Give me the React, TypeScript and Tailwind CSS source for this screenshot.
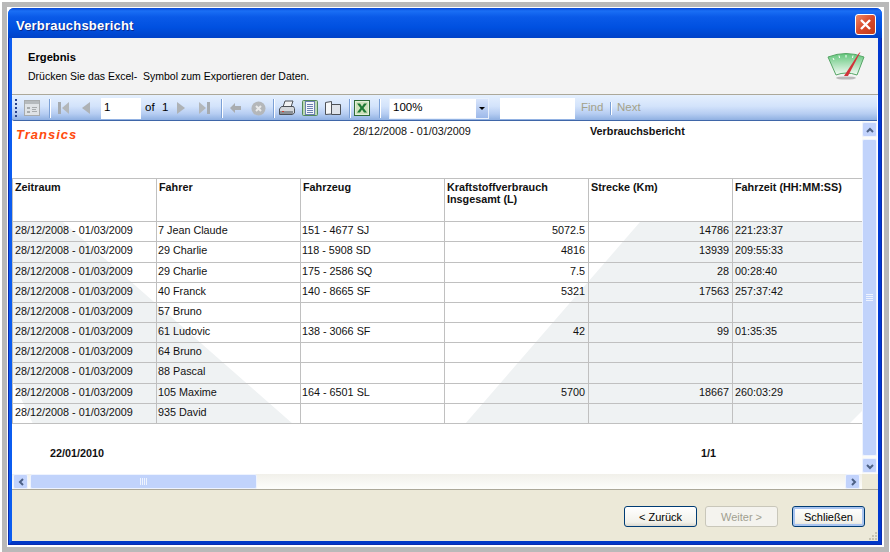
import React from "react";

const rows = [
  { driver: "7 Jean Claude", truck: "151 - 4677 SJ", fuel: "5072.5", km: "14786", time: "221:23:37", h: "h-[20px]" },
  { driver: "29 Charlie", truck: "118 - 5908 SD", fuel: "4816", km: "13939", time: "209:55:33", h: "h-[21px]" },
  { driver: "29 Charlie", truck: "175 - 2586 SQ", fuel: "7.5", km: "28", time: "00:28:40", h: "h-[20px]" },
  { driver: "40 Franck", truck: "140 - 8665 SF", fuel: "5321", km: "17563", time: "257:37:42", h: "h-[20px]" },
  { driver: "57 Bruno", truck: "", fuel: "", km: "", time: "", h: "h-[20px]" },
  { driver: "61 Ludovic", truck: "138 - 3066 SF", fuel: "42", km: "99", time: "01:35:35", h: "h-[20px]" },
  { driver: "64 Bruno", truck: "", fuel: "", km: "", time: "", h: "h-[20px]" },
  { driver: "88 Pascal", truck: "", fuel: "", km: "", time: "", h: "h-[21px]" },
  { driver: "105 Maxime", truck: "164 - 6501 SL", fuel: "5700", km: "18667", time: "260:03:29", h: "h-[20px]" },
  { driver: "935 David", truck: "", fuel: "", km: "", time: "", h: "h-[20px]" },
];

const grid = "grid grid-cols-[145px_144px_144px_144px_144px_129px]";
const cell = "border-r border-[#c0c0c0] overflow-hidden whitespace-nowrap";

function Sep({ className = "" }: { className?: string }) {
  return <div className={`h-[19px] w-[2px] shrink-0 border-l border-[#7ba0d6] bg-white ${className}`} />;
}

function Chevron({ dir }: { dir: "up" | "down" | "left" | "right" }) {
  const d = {
    up: "M2 7 L5 4 L8 7",
    down: "M2 4 L5 7 L8 4",
    left: "M7 2 L4 5 L7 8",
    right: "M4 2 L7 5 L4 8",
  }[dir];
  return (
    <svg width="10" height="10" viewBox="0 0 10 10" fill="none">
      <path d={d} stroke="#4d6185" strokeWidth="2" />
    </svg>
  );
}

function ScrollBtn({ dir, className = "" }: { dir: "up" | "down" | "left" | "right"; className?: string }) {
  return (
    <div className={`flex h-[15px] w-[15px] shrink-0 items-center justify-center rounded-[2px] border border-[#eef3fe] bg-[#c2d3fc] ${className}`}>
      <Chevron dir={dir} />
    </div>
  );
}

function Gauge() {
  return (
    <svg width="40" height="32" viewBox="0 0 40 32" className="mt-[12px] mr-[12px]">
      <defs>
        <linearGradient id="gaugeFill" x1="0" y1="0" x2="0" y2="1">
          <stop offset="0" stopColor="#62c67b" />
          <stop offset="1" stopColor="#f4fbf5" />
        </linearGradient>
      </defs>
      <ellipse cx="20" cy="28" rx="10" ry="1.6" fill="#b9b9b9" />
      <path d="M2 7 Q20 0 38 7 L31 25 Q20 21 10 25 Z" fill="url(#gaugeFill)" stroke="#55a565" strokeWidth="1" />
      <path d="M7 8 L8 10 M13 5.5 L13.500 8 M20 5 L20 7.500 M27 5.500 L26.500 8" stroke="#fff" strokeWidth="1" />
      <path d="M18 26 L33 3 L34.500 2 L22 26 Z" fill="#d2333a" />
    </svg>
  );
}

function Toolbar() {
  return (
    <div className="flex h-[26px] w-[865px] items-center rounded-l-[2px] border-b border-[#3f66a8] bg-[linear-gradient(#e5f0fe_0%,#d3e3fb_45%,#b6cdf2_75%,#8fb0e2_100%)] pt-[1px] text-[11.5px] text-black">
      {/* grip */}
      <div className="ml-[3px] flex w-[2px] flex-col gap-[2px]">
        <div className="h-[2px] bg-[#27418b]" />
        <div className="h-[2px] bg-[#27418b]" />
        <div className="h-[2px] bg-[#27418b]" />
        <div className="h-[2px] bg-[#27418b]" />
        <div className="h-[2px] bg-[#27418b]" />
      </div>
      {/* doc map */}
      <svg width="16" height="16" viewBox="0 0 16 16" className="ml-[7px]">
        <rect x="0.500" y="0.500" width="15" height="15" fill="#dfe3e6" stroke="#a7abad" />
        <rect x="1" y="1" width="14" height="3" fill="#b5babd" />
        <path d="M3 7h3v2H3zM3 11h3v2H3z" fill="#a7abad" />
        <path d="M8 7.500h5M8 9.500h4M8 11.500h5" stroke="#a7abad" />
      </svg>
      <Sep className="ml-[9px]" />
      {/* first */}
      <svg width="12" height="14" viewBox="0 0 12 14" className="ml-[7px]">
        <path d="M0 1h3v12H0z" fill="#a6abb0" />
        <path d="M11 1v12L4 7z" fill="#b3b7ba" />
      </svg>
      {/* prev */}
      <svg width="8" height="14" viewBox="0 0 8 14" className="ml-[12px]">
        <path d="M8 1v12L0 7z" fill="#aeb2b5" />
      </svg>
      <div className="ml-[11px] flex h-[21px] w-[40px] items-center bg-white pl-[3px]">1</div>
      <span className="ml-[4px] w-[17px]">of</span>
      <span className="w-[15px]">1</span>
      <svg width="8" height="14" viewBox="0 0 8 14">
        <path d="M0 1v12l8-6z" fill="#aeb2b5" />
      </svg>
      <svg width="12" height="14" viewBox="0 0 12 14" className="ml-[14px]">
        <path d="M0 1v12l7-6z" fill="#b3b7ba" />
        <path d="M8 1h3v12H8z" fill="#a6abb0" />
      </svg>
      <Sep className="ml-[10px]" />
      {/* back */}
      <svg width="11" height="10" viewBox="0 0 11 10" className="ml-[7px]">
        <path d="M0 5l5-5v3h6v4H5v3z" fill="#a9adb1" />
      </svg>
      {/* stop */}
      <svg width="15" height="15" viewBox="0 0 15 15" className="ml-[10px]">
        <circle cx="7.500" cy="7.500" r="7" fill="#b4b7ba" />
        <path d="M5 5l5 5M10 5l-5 5" stroke="#e9eaeb" strokeWidth="2" />
      </svg>
      <Sep className="ml-[7px]" />
      {/* print */}
      <svg width="16" height="16" viewBox="0 0 16 16" className="ml-[4px]">
        <path d="M6 1h8l-2 6H4z" fill="#f2f3f4" stroke="#4d5157" />
        <path d="M2.500 6.500h12l1 2v4.500l-2 1.500H0.500V9z" fill="#d5d8dc" stroke="#4d5157" />
        <rect x="1" y="11" width="13" height="3" fill="#8b9096" />
        <rect x="3" y="11" width="2" height="1" fill="#d23b2f" />
      </svg>
      {/* page */}
      <svg width="16" height="16" viewBox="0 0 16 16" className="ml-[7px]">
        <rect x="0.500" y="0.500" width="15" height="15" rx="1" fill="#bcd8b4" stroke="#53895a" />
        <rect x="3.500" y="1.500" width="9" height="13" fill="#f4f7fd" stroke="#6c80b0" />
        <path d="M5 4.500h6M5 6.500h6M5 8.500h6M5 10.500h6M5 12.500h6" stroke="#6c80b0" />
      </svg>
      {/* book */}
      <svg width="16" height="15" viewBox="0 0 16 15" className="ml-[7px]">
        <path d="M0.500 1.500L6.500 0.500V13L0.500 13.500z" fill="#f6f7f8" stroke="#4d5157" />
        <path d="M6.500 3.500h9v10h-9z" fill="#dfe3ea" stroke="#4d5157" />
      </svg>
      <Sep className="ml-[8px]" />
      {/* excel */}
      <svg width="16" height="16" viewBox="0 0 16 16" className="ml-[3px]">
        <rect x="0.500" y="0.500" width="15" height="15" fill="#e4efd9" stroke="#2e6b38" />
        <rect x="2" y="2" width="12" height="12" fill="#cfe2bc" />
        <path d="M3 3.500h3l2 3 2-3h3l-3.500 4.500 3.500 4.500h-3l-2-3-2 3H3l3.500-4.500z" fill="#1f7a34" />
      </svg>
      <Sep className="ml-[9px]" />
      <div className="ml-[8px] flex h-[21px] w-[100px] items-center border border-[#e8f0fc] bg-white">
        <span className="flex-1 pl-[3px]">100%</span>
        <div className="flex h-full w-[12px] items-center justify-center bg-[linear-gradient(#d9e5fb,#9db9ea)]">
          <div className="h-0 w-0 border-x-[3px] border-t-[3px] border-x-transparent border-t-black" />
        </div>
      </div>
      <div className="ml-[11px] h-[21px] w-[75px] bg-white" />
      <span className="ml-[6px] w-[24px] text-[#a3a18a]">Find</span>
      <Sep className="ml-[5px] !h-[13px]" />
      <span className="ml-[5px] text-[#a3a18a]">Next</span>
    </div>
  );
}

function Table() {
  return (
    <div className="mt-[35px] w-[850px] text-[10.8px] text-[#111]">
      <div className={`${grid} h-[44px] border-y border-[#c0c0c0] font-bold leading-[12px]`}>
        <div className={`${cell} border-l pl-[2px] pt-[2px]`}>Zeitraum</div>
        <div className={`${cell} pl-[2px] pt-[2px]`}>Fahrer</div>
        <div className={`${cell} pl-[2px] pt-[2px]`}>Fahrzeug</div>
        <div className={`${cell} pl-[2px] pt-[2px]`}>
          Kraftstoffverbrauch
          <br />
          Insgesamt (L)
        </div>
        <div className={`${cell} pl-[2px] pt-[2px]`}>Strecke (Km)</div>
        <div className="overflow-hidden whitespace-nowrap pl-[2px] pt-[2px]">Fahrzeit (HH:MM:SS)</div>
      </div>
      <div className="relative">
        {/* watermark behind the rows */}
        <svg width="850" height="203" viewBox="0 0 850 203" className="absolute left-0 top-0">
          <path d="M0 0H51L281 202H21L0 157Z" fill="#eff2f3" />
          <path d="M628 0L453 202H837L850 189V0Z" fill="#eff2f3" />
        </svg>
        <div className="relative">
          {rows.map((r, i) => (
            <div key={i} className={`${grid} ${r.h} items-stretch border-b border-[#c0c0c0] leading-[16px]`}>
              <div className={`${cell} border-l pl-[2px]`}>28/12/2008 - 01/03/2009</div>
              <div className={`${cell} pl-[1px]`}>{r.driver}</div>
              <div className={`${cell} pl-[1px]`}>{r.truck}</div>
              <div className={`${cell} pr-[3px] text-right`}>{r.fuel}</div>
              <div className={`${cell} pr-[3px] text-right`}>{r.km}</div>
              <div className="overflow-hidden whitespace-nowrap pl-[2px]">{r.time}</div>
            </div>
          ))}
        </div>
      </div>
      <div className="mt-[23px] flex h-[12px] items-center font-bold leading-[12px]">
        <span className="ml-[38px] w-[651px]">22/01/2010</span>
        <span>1/1</span>
      </div>
    </div>
  );
}

function Button({ children, disabled, focus, className = "" }: { children: React.ReactNode; disabled?: boolean; focus?: boolean; className?: string }) {
  return (
    <button
      className={`h-[21px] w-[73px] rounded-[3px] border pt-[1px] text-[11px] leading-none ${
        disabled
          ? "border-[#c9c7ba] bg-[#f4f3ee] text-[#a19f90]"
          : "border-[#003c74] bg-[linear-gradient(#ffffff,#f2f1ea_80%,#dcd9cf)] text-black"
      } ${focus ? "shadow-[inset_0_0_0_2px_#a9c4f0]" : ""} ${className}`}
    >
      {children}
    </button>
  );
}

export default function App() {
  return (
    <div className="h-[552px] w-[890px] overflow-hidden bg-white pl-[2px] pr-[1px] pt-[2px] font-['Liberation_Sans',Arial,sans-serif]">
      <div className="h-[550px] bg-[#b9b9b9] pl-[5px] pr-[5px] pt-[5px]">
        <div className="h-[540px] bg-white pl-[1px] pr-[1px] pt-[1px]">
          <div className="h-[537px] w-[874px] overflow-hidden rounded-t-[6px] bg-[#0a50e0]">
            {/* title bar */}
            <div className="flex h-[30px] items-center justify-between bg-[linear-gradient(#0847d6_0%,#1a6ff5_10%,#0a5ae8_30%,#0050e0_65%,#0042c8_100%)] pl-[8px] pr-[6px]">
              <span className="pt-[5px] text-[13px] font-bold tracking-[0.2px] text-white [text-shadow:1px_1px_0_#0a2a90]">
                Verbrauchsbericht
              </span>
              <div className="mt-[2px] flex h-[21px] w-[21px] items-center justify-center rounded-[3px] border border-white bg-[linear-gradient(135deg,#ee8a66,#d8492a_50%,#c23a18)]">
                <svg width="13" height="13" viewBox="0 0 13 13">
                  <path d="M2 2L11 11M11 2L2 11" stroke="#fff" strokeWidth="2.400" />
                </svg>
              </div>
            </div>
            {/* window body */}
            <div className="h-[507px] border-x-[1px] border-b-[1px] border-[#0a2bb0]">
              <div className="flex h-[506px] flex-col border-b-[3px] border-l-[3px] border-r-[3px] border-b-[#0038c8] border-l-[#0b5cf0] border-r-[#0038d0] bg-white">
                <div className="flex h-[57px] shrink-0 justify-between border-b border-[#aca899] bg-[#f3f3f3]">
                  <div className="pl-[16px] pt-[12px] leading-[14px] text-black">
                    <div className="text-[11.2px] font-bold">Ergebnis</div>
                    <div className="mt-[5px] text-[10.5px]">Drücken Sie das Excel-&nbsp; Symbol zum Exportieren der Daten.</div>
                  </div>
                  <Gauge />
                </div>
                <Toolbar />
                <div className="flex h-[353px] w-[865px] shrink-0">
                  <div className="w-[850px] shrink-0">
                    <div className="flex pt-[4px] text-[10.8px] leading-[12px] text-[#111]">
                      <span className="ml-[4px] mt-[2px] w-[337px] text-[13px] font-bold italic leading-[16px] tracking-[1px] text-[#ff4a0d]">Transics</span>
                      <span className="w-[237px]">28/12/2008 - 01/03/2009</span>
                      <span className="font-bold">Verbrauchsbericht</span>
                    </div>
                    <Table />
                  </div>
                  {/* vertical scrollbar */}
                  <div className="flex w-[15px] flex-col items-center bg-[#fbfbf8] pt-[1px]">
                    <ScrollBtn dir="up" />
                    <div className="mt-[2px] flex h-[317px] w-[15px] items-center justify-center rounded-[2px] border border-[#eef3fe] bg-[#c1d3fb]">
                      <div className="flex w-[7px] flex-col gap-[1px]">
                        <div className="h-px bg-[#eef3fe]" />
                        <div className="h-px bg-[#eef3fe]" />
                        <div className="h-px bg-[#eef3fe]" />
                        <div className="h-px bg-[#eef3fe]" />
                      </div>
                    </div>
                    <ScrollBtn dir="down" className="mt-[2px]" />
                  </div>
                </div>
                {/* horizontal scrollbar */}
                <div className="flex h-[16px] w-full shrink-0 items-center border-b border-[#aca899] bg-[#ece9d8]">
                  <div className="flex h-[15px] w-[850px] items-center bg-[linear-gradient(#f1f0ea,#fdfdfb)] pl-[1px]">
                    <ScrollBtn dir="left" />
                    <div className="ml-[2px] flex h-[15px] w-[227px] items-center justify-center gap-[1px] rounded-[2px] border border-[#eef3fe] bg-[#c1d3fb]">
                      <div className="h-[7px] w-px bg-[#eef3fe]" />
                      <div className="h-[7px] w-px bg-[#eef3fe]" />
                      <div className="h-[7px] w-px bg-[#eef3fe]" />
                      <div className="h-[7px] w-px bg-[#eef3fe]" />
                    </div>
                    <ScrollBtn dir="right" className="ml-auto mr-[2px]" />
                  </div>
                </div>
                {/* footer */}
                <div className="relative flex flex-1 items-start justify-end bg-[#ece9d8] pr-[13px] pt-[16px]">
                  <Button>&lt; Zurück</Button>
                  <Button disabled className="ml-[8px]">Weiter &gt;</Button>
                  <Button focus className="ml-[14px]">Schließen</Button>
                  <div className="absolute bottom-[1px] right-[1px] grid grid-cols-3 gap-[1px]">
                    <span className="h-[2px] w-[2px]" />
                    <span className="h-[2px] w-[2px]" />
                    <span className="h-[2px] w-[2px] bg-[#c7c4b2]" />
                    <span className="h-[2px] w-[2px]" />
                    <span className="h-[2px] w-[2px] bg-[#c7c4b2]" />
                    <span className="h-[2px] w-[2px] bg-[#c7c4b2]" />
                    <span className="h-[2px] w-[2px] bg-[#c7c4b2]" />
                    <span className="h-[2px] w-[2px] bg-[#c7c4b2]" />
                    <span className="h-[2px] w-[2px] bg-[#c7c4b2]" />
                  </div>
                </div>
              </div>
            </div>
          </div>
        </div>
      </div>
    </div>
  );
}
